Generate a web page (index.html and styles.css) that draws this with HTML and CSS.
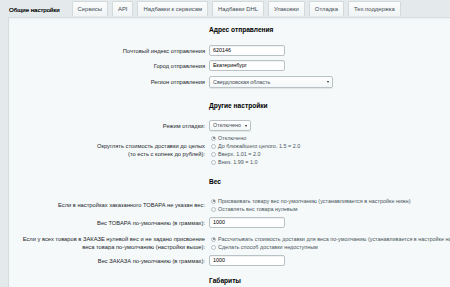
FILE: index.html
```html
<!DOCTYPE html>
<html lang="ru">
<head>
<meta charset="UTF-8">
<title>Настройки модуля</title>
<link rel="stylesheet" href="styles.css">
</head>
<body>
<div class="tabs">
  <span class="tab active">Общие настройки</span>
  <span class="tab">Сервисы</span>
  <span class="tab">API</span>
  <span class="tab">Надбавки к сервисам</span>
  <span class="tab">Надбавки DHL</span>
  <span class="tab">Упаковки</span>
  <span class="tab">Отладка</span>
  <span class="tab">Тех.поддержка</span>
</div>
<div class="panel">
  <div class="heading first">Адрес отправления</div>
  <div class="row">
    <div class="label">Почтовый индекс отправления</div>
    <div class="field"><span class="input">620146</span></div>
  </div>
  <div class="row">
    <div class="label">Город отправления</div>
    <div class="field"><span class="input">Екатеринбург</span></div>
  </div>
  <div class="row pt3">
    <div class="label">Регион отправления</div>
    <div class="field"><span class="select wide">Свердловская область</span></div>
  </div>

  <div class="heading">Другие настройки</div>
  <div class="row tight">
    <div class="label">Режим отладки:</div>
    <div class="field"><span class="select small">Отключено</span></div>
  </div>
  <div class="row radios">
    <div class="label">Округлять стоимость доставки до целых<br>(то есть с копеек до рублей):</div>
    <div class="field">
      <div class="opt"><span class="radio on"></span>Отключено</div>
      <div class="opt"><span class="radio"></span>До ближайшего целого. 1.5 = 2.0</div>
      <div class="opt"><span class="radio"></span>Вверх. 1.01 = 2.0</div>
      <div class="opt"><span class="radio"></span>Вниз. 1.99 = 1.0</div>
    </div>
  </div>

  <div class="heading">Вес</div>
  <div class="row radios pt2">
    <div class="label">Если в настройках заказанного ТОВАРА не указан вес:</div>
    <div class="field">
      <div class="opt"><span class="radio on"></span>Присваивать товару вес по-умолчанию (устанавливается в настройке ниже)</div>
      <div class="opt"><span class="radio"></span>Оставлять вес товара нулевым</div>
    </div>
  </div>
  <div class="row pt4">
    <div class="label">Вес ТОВАРА по-умолчанию (в граммах):</div>
    <div class="field"><span class="input">1000</span></div>
  </div>
  <div class="row radios pt5">
    <div class="label">Если у всех товаров в ЗАКАЗЕ нулевой вес и не задано присвоение<br>веса товара по-умолчанию (настройки выше):</div>
    <div class="field">
      <div class="opt"><span class="radio on"></span>Рассчитывать стоимость доставки для веса по-умолчанию (устанавливается в настройке ниже)</div>
      <div class="opt"><span class="radio"></span>Сделать способ доставки недоступным</div>
    </div>
  </div>
  <div class="row pt4">
    <div class="label">Вес ЗАКАЗА по-умолчанию (в граммах):</div>
    <div class="field"><span class="input">1000</span></div>
  </div>

  <div class="heading last">Габариты</div>
</div>
</body>
</html>
```

FILE: styles.css
```css
body {
  margin: 0;
  padding: 0;
  background: #e4eaec;
  font-family: "Liberation Sans", Arial, sans-serif;
  color: #000;
  overflow: hidden;
  height: 287px;
}
.tabs {
  display: flex;
  gap: 4px;
  padding: 1px 0 0 1px;
  height: 17px;
  box-sizing: border-box;
}
.tab {
  height: 15px;
  line-height: 15px;
  padding: 0 5px;
  box-sizing: border-box;
  font-size: 5.9px;
  color: #3f4b54;
  white-space: nowrap;
  background: linear-gradient(#fbfcfc, #f0f4f5);
  border: 1px solid #d2dadc;
  border-bottom: none;
  border-radius: 2px 2px 0 0;
}
.tab.active {
  background: #e4eaec;
  border-color: #e4eaec;
  font-size: 6.1px;
  color: #111;
  text-shadow: 0 0 0.3px #111;
  padding: 0 7px;
}
.panel {
  margin: 0 0 0 8px;
  background: #f5f9f9;
  border-left: 1px solid #d6dde0;
  border-top: 1px solid #d6dde0;
  box-shadow: inset 0 1px 2px rgba(0, 0, 0, 0.04);
  height: 300px;
  box-sizing: border-box;
}
.heading {
  margin: 11px 0 8px 200px;
  height: 10px;
  line-height: 10px;
  font-size: 6.6px;
  font-weight: bold;
  color: #000;
}
.heading.first {
  margin-top: 7px;
}
.heading.last {
  margin-top: 8px;
}
.row {
  display: grid;
  grid-template-columns: 196px 1fr;
  column-gap: 4px;
  align-items: center;
  padding: 2px 0;
}
.row.tight {
  padding: 1px 0 3px;
}
.row.radios {
  padding: 0;
}
.row.pt2 {
  padding-top: 2px;
}
.row.pt3 {
  padding-top: 3px;
}
.row.pt4 {
  padding-top: 4px;
}
.row.pt5 {
  padding-top: 5px;
}
.label {
  text-align: right;
  font-size: 5.75px;
  line-height: 8px;
  color: #1c262c;
  white-space: nowrap;
}
.field {
  white-space: nowrap;
  font-size: 5.45px;
  color: #4a565d;
}
.input, .select {
  display: inline-block;
  box-sizing: border-box;
  height: 11px;
  line-height: 9px;
  width: 76px;
  padding: 0 3px;
  background: #fff;
  border: 1px solid #b9c3c6;
  border-radius: 2px;
  box-shadow: inset 0 1px 1px rgba(0, 0, 0, 0.06);
  font-size: 5.4px;
  color: #000;
  vertical-align: middle;
}
.select {
  position: relative;
  background: linear-gradient(#ffffff, #f3f6f7);
  height: 12px;
  line-height: 10px;
  box-shadow: 0 1px 1px rgba(0, 0, 0, 0.08);
  color: #3f4b54;
}
.select::after {
  content: "";
  position: absolute;
  right: 3px;
  top: 4px;
  border-left: 1.5px solid transparent;
  border-right: 1.5px solid transparent;
  border-top: 2.5px solid #222;
}
.select.wide {
  width: 124px;
}
.select.small {
  width: 42px;
  height: 11px;
  line-height: 9px;
}
.select.small::after {
  top: 3.5px;
}
.opt {
  height: 8px;
  line-height: 8px;
  display: flex;
  align-items: center;
  padding-left: 2px;
}
.radio {
  width: 5px;
  height: 5px;
  box-sizing: border-box;
  border: 1px solid #b5bfc3;
  border-radius: 50%;
  background: #fafbfb;
  margin-right: 2px;
  position: relative;
  flex: none;
}
.radio.on::after {
  content: "";
  position: absolute;
  left: 0.5px;
  top: 0.5px;
  width: 2px;
  height: 2px;
  border-radius: 50%;
  background: #6a777e;
}
```
